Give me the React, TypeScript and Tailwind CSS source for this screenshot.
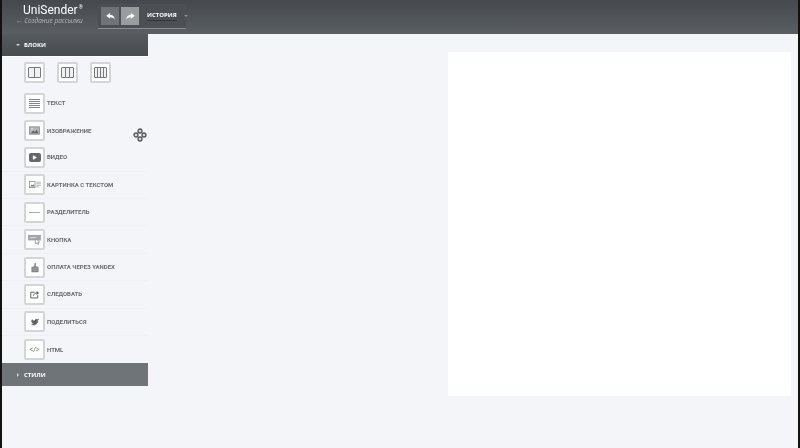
import { Play, Twitter } from "lucide-react";
import type { ReactNode } from "react";

function IconBox({ children }: { children: ReactNode }) {
  return (
    <div className="flex h-[21px] w-[21px] shrink-0 items-center justify-center rounded-[2px] border-2 border-[#d4d5d7] bg-white">
      {children}
    </div>
  );
}

function Columns({ count }: { count: number }) {
  return (
    <div className="flex h-[11px] w-[13px] overflow-hidden rounded-[1px] border border-[#77797c]">
      {Array.from({ length: count }).map((_, i) => (
        <div key={i} className="flex-1 border-l border-[#77797c] bg-[#f1f1f2] first:border-l-0" />
      ))}
    </div>
  );
}

function TextIcon() {
  return (
    <div className="flex w-[11px] flex-col gap-[1px]">
      {[0, 1, 2, 3, 4].map((i) => (
        <div key={i} className="h-[1px] bg-[#808285]" />
      ))}
    </div>
  );
}

function ImageIcon() {
  return (
    <svg width="11" height="9" viewBox="0 0 13 11">
      <rect x="0.5" y="1" width="12" height="9" fill="#b4b5b7" stroke="#8a8b8d" />
      <circle cx="3.5" cy="3.5" r="1" fill="#eee" />
      <path d="M2 9l3-3.500 2 2 2-3 2.500 4.500z" fill="#626365" />
    </svg>
  );
}

function VideoIcon() {
  return (
    <div className="flex h-[9px] w-[12px] items-center justify-center rounded-[2px] bg-[#66686a]">
      <Play size={5} fill="#fff" stroke="#fff" />
    </div>
  );
}

function PictureTextIcon() {
  return (
    <svg width="14" height="7" viewBox="0 0 15 9">
      <rect x="0.5" y="0.5" width="7" height="8" fill="#fff" stroke="#8a8b8d" />
      <path d="M1.500 7l2-2.500 1.200 1.200 1.200-1.500 1 2.800z" fill="#6c6d6f" />
      <path d="M9 1.500h6M9 3.500h6M9 5.500h6M9 7.500h4" stroke="#a5a6a8" />
    </svg>
  );
}

function DividerIcon() {
  return <div className="h-[1px] w-[11px] bg-[#aaabad]" />;
}

function ButtonIcon() {
  return (
    <svg width="13" height="11" viewBox="0 0 14 12">
      <rect x="0" y="1" width="14" height="6" fill="#a3a4a6" />
      <path d="M2 4h7" stroke="#e6e6e6" />
      <path d="M8 5l0 6 1.500-1.500 1.200 2 1-.6-1.100-2 2-.2z" fill="#fff" stroke="#77797c" strokeWidth="0.7" />
    </svg>
  );
}

function YandexIcon() {
  return (
    <svg width="8" height="11" viewBox="0 0 10 13">
      <path d="M0.500 6l3.500-1 .5-4 1.500 0 .2 4 3.300 1v6.500h-9z" fill="#858688" />
      <path d="M2 8h6M2 10h6" stroke="#a8a9ab" />
    </svg>
  );
}

function FollowIcon() {
  return (
    <svg width="10" height="9" viewBox="0 0 13 11" fill="none" stroke="#5f6163" strokeWidth="1.300">
      <path d="M6 2.500H1v7.500h9V6.500" />
      <path d="M4.500 7c.5-2.300 2.200-3.500 4.500-3.500" />
      <path d="M8.500 1l3.500 2.500-3.500 2.500z" fill="#5f6163" stroke="none" />
    </svg>
  );
}

function TweetIcon() {
  return <Twitter size={8} fill="#5f6163" stroke="#5f6163" />;
}

function CodeIcon() {
  return <span className="text-[7px] leading-none text-[#5f6163]">&lt;/&gt;</span>;
}

function BackArrow({ flip }: { flip?: boolean }) {
  return (
    <svg width="9" height="7" viewBox="0 0 11 9" className={flip ? "-scale-x-100" : ""}>
      <path d="M0 3.500L5 0V2.200C8.500 2.200 10.500 4.500 11 8.500C9.500 6.500 7.500 5.500 5 5.500V7.500z" fill="#fff" />
    </svg>
  );
}

const rows: { label: string; icon: ReactNode; line?: boolean }[] = [
  { label: "Текст", icon: <TextIcon /> },
  { label: "Изображение", icon: <ImageIcon /> },
  { label: "Видео", icon: <VideoIcon />, line: true },
  { label: "Картинка с текстом", icon: <PictureTextIcon />, line: true },
  { label: "Разделитель", icon: <DividerIcon />, line: true },
  { label: "Кнопка", icon: <ButtonIcon />, line: true },
  { label: "Оплата через Yandex", icon: <YandexIcon />, line: true },
  { label: "Следовать", icon: <FollowIcon />, line: true },
  { label: "Поделиться", icon: <TweetIcon />, line: true },
  { label: "HTML", icon: <CodeIcon /> },
];

function TopBar() {
  return (
    <header className="flex h-[34px] shrink-0 items-start bg-gradient-to-b from-[#45494d] to-[#5a5f63]">
      <div className="flex w-[96px] shrink-0 flex-col pl-[14px] pt-[4px]">
        <div className="flex items-start pl-[7px] font-['Roboto',sans-serif] text-[12px] leading-[13px] text-white">
          UniSender
          <span className="ml-[1px] text-[5px] leading-[6px]">®</span>
        </div>
        <div className="whitespace-nowrap text-[6.500px] italic leading-[8px] text-[#b4b7ba]">← Создание рассылки</div>
      </div>
      <div className="mt-[4px] flex h-[25px] w-[88px] shrink-0 items-center border-b border-[#8b8f92] bg-[#4c5054] pl-[3px]">
        <button className="flex h-[18px] w-[18px] shrink-0 items-center justify-center bg-[#707478]">
          <BackArrow />
        </button>
        <button className="ml-[2px] flex h-[18px] w-[18px] shrink-0 items-center justify-center bg-[#9a9da0]">
          <BackArrow flip />
        </button>
        <span className="ml-[8px] border-b border-[#33363a] text-[6px] font-bold leading-[9px] text-white">
          ИСТОРИЯ
        </span>
        <span className="ml-[7px] h-0 w-0 border-x-[2px] border-t-[2px] border-x-transparent border-t-[#8b8f92]" />
      </div>
    </header>
  );
}

function Sidebar() {
  return (
    <aside className="flex w-[146px] shrink-0 flex-col">
      <div className="flex h-[23px] shrink-0 items-center gap-[4px] border-b border-white bg-gradient-to-b from-[#555a5e] to-[#484c50] pl-[14px]">
        <span className="h-0 w-0 border-x-[2px] border-t-[2px] border-x-transparent border-t-[#d5d6d8]" />
        <span className="text-[6px] font-bold leading-none text-white">БЛОКИ</span>
      </div>
      <div className="flex gap-[12px] pl-[22px] pt-[5px]">
        <IconBox><Columns count={2} /></IconBox>
        <IconBox><Columns count={3} /></IconBox>
        <IconBox><Columns count={4} /></IconBox>
      </div>
      <ul className="flex flex-col pt-[6.500px]">
        {rows.map((row) => (
          <li
            key={row.label}
            className={`flex h-[27.400px] items-center gap-[2px] pl-[22px] ${row.line ? "border-b border-[#f0f1f3]" : ""}`}
          >
            <IconBox>{row.icon}</IconBox>
            <span className="font-['Roboto',sans-serif] text-[6px] font-bold uppercase leading-none text-[#6a6c6f]">
              {row.label}
            </span>
          </li>
        ))}
      </ul>
      <div className="flex h-[23px] shrink-0 items-center gap-[5px] bg-[#6f7478] pl-[15px]">
        <span className="h-0 w-0 border-y-[2px] border-l-[2px] border-y-transparent border-l-[#d5d6d8]" />
        <span className="text-[6px] font-bold leading-none text-white">СТИЛИ</span>
      </div>
    </aside>
  );
}

export default function App() {
  return (
    <div className="relative flex h-[448px] w-[800px] flex-col overflow-hidden bg-[#f4f5f8] px-[2px] font-['Open_Sans',sans-serif] blur-[0.4px]">
      <TopBar />
      <div className="flex min-h-0 flex-1">
        <Sidebar />
        <main className="flex-1 pl-[300px] pr-[7px] pt-[18px]">
          <div className="h-[344px] bg-white" />
        </main>
      </div>
      {/* cursor */}
      <svg className="absolute left-[133px] top-[128px]" width="14" height="14" viewBox="0 0 14 14" fill="#d8d8d8" stroke="#555" strokeWidth="1.300">
        <circle cx="7" cy="3" r="2" />
        <circle cx="3" cy="7" r="2" />
        <circle cx="11" cy="7" r="2" />
        <circle cx="7" cy="11" r="2" />
      </svg>
      <div className="absolute inset-y-0 left-0 w-[2px] bg-[#111]" />
      <div className="absolute inset-y-0 right-0 w-[2px] bg-[#111]" />
    </div>
  );
}
